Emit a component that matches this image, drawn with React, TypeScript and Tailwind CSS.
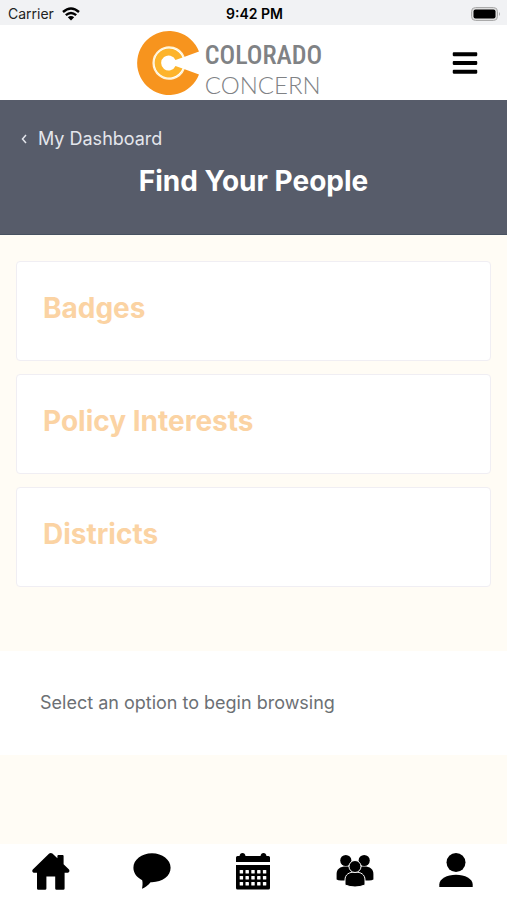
import { FaBars } from "react-icons/fa";

const options = ["Badges", "Policy Interests", "Districts"];

function HomeIcon() {
  return (
    <svg viewBox="0 0 38 38" className="h-[38px] w-[38px]" fill="currentColor">
      <path d="M17.2 1.6Q18.8.2 20.4 1.6L25.4 6.3V4Q25.4 3 26.4 3H30.6Q31.6 3 31.6 4V12.2L37 17.6Q38.2 19.6 36 20.8H32.6V36.4Q32.6 37.8 31.2 37.8H24.6Q23.2 37.8 23.2 36.4V24.4H14.4V36.4Q14.4 37.8 13 37.8H6.4Q5 37.8 5 36.4V20.8H1.6Q-.6 19.6.8 17.6Z" />
    </svg>
  );
}

function ChatIcon() {
  return (
    <svg viewBox="0 0 38 38" className="h-[38px] w-[38px]" fill="currentColor">
      <path d="M19 1.2C29.4 1.2 37.6 7.6 37.6 15.8S29.4 30.2 19 30.2H17.6C15 33.4 12 35.6 9 36.8C9.6 33.6 9.8 31 9.2 28.2C3.8 25.6.4 21 .4 15.8C.4 7.6 8.6 1.2 19 1.2Z" />
    </svg>
  );
}

function CalendarIcon() {
  const columns = [3.7, 9.5, 15.3, 21.1, 26.9];
  const rows = [18, 24, 30];
  return (
    <svg viewBox="0 0 34 38" className="h-[38px] w-[34px]" fill="currentColor">
      <path d="M0 5.5Q0 4 1.5 4H3.5Q4 1 6.5 1T9.5 4H24.5Q25 1 27.5 1T30.5 4H32.5Q34 4 34 5.5V10H0Z" />
      <path d="M0 13H34V36Q34 37.5 32.5 37.5H1.5Q0 37.5 0 36Z" />
      {rows.map((y) =>
        columns.map((x) => (
          <rect key={`${x}-${y}`} x={x} y={y} width="3.4" height="3.6" rx=".6" fill="#fff" />
        ))
      )}
    </svg>
  );
}

function GroupIcon() {
  return (
    <svg viewBox="0 -1 38 38" className="h-[38px] w-[38px]" fill="currentColor">
      <circle cx="9.8" cy="7.5" r="5.6" />
      <circle cx="28.2" cy="7.5" r="5.6" />
      <path d="M.6 26.5V21C.6 16 4 13.5 9.8 13.5S19 16 19 21V27.5H5Q2 27.5.6 26.5Z" />
      <path d="M37.4 26.5V21C37.4 16 34 13.5 28.2 13.5S19 16 19 21V27.5H33Q36 27.5 37.4 26.5Z" />
      <g stroke="#fff" strokeWidth="1">
        <path d="M9 32V27C9 21.5 13 19 19 19S29 21.5 29 27V32Q24 34 19 34T9 32Z" />
        <circle cx="19" cy="13.5" r="6" />
      </g>
    </svg>
  );
}

function PersonIcon() {
  return (
    <svg viewBox="0 0 34 38" className="h-[38px] w-[34px]" fill="currentColor">
      <circle cx="17" cy="10.5" r="9.5" />
      <path d="M.3 35V32.5C.3 27 8 22.8 17 22.8S33.7 27 33.7 32.5V35Z" />
    </svg>
  );
}

const tabs = [
  { label: "Home", icon: HomeIcon },
  { label: "Messages", icon: ChatIcon },
  { label: "Calendar", icon: CalendarIcon },
  { label: "Groups", icon: GroupIcon },
  { label: "Profile", icon: PersonIcon },
];

export default function App() {
  return (
    <div className="flex min-h-screen flex-col bg-[#fffcf5] font-['Inter',sans-serif]">

      {/* Status bar */}
      <div className="grid h-[25px] grid-cols-3 items-center bg-[#f1f2f4] pt-0.5 pr-1.5 pl-2 text-[#222]">
        <div className="flex items-center gap-2 text-sm">
          <span>Carrier</span>
          <svg viewBox="0 0 18 14" className="h-3.5 w-[18px]" fill="none" stroke="#000" strokeWidth="2.4">
            <path d="M1 5Q9-2 17 5" />
            <path d="M3.8 8.2Q9 3.6 14.2 8.2" />
            <path d="M9 13.5L5.8 10.3Q9 7.8 12.2 10.3Z" fill="#000" stroke="none" />
          </svg>
        </div>
        <span className="text-center text-sm font-semibold text-black">9:42 PM</span>
        <svg viewBox="0 0 30 14" className="h-3.5 w-[30px] justify-self-end">
          <rect x=".5" y=".5" width="26" height="13" rx="4" fill="#ddd" stroke="#aaa" />
          <rect x="2.5" y="2.5" width="22" height="9" rx="2" fill="#000" />
          <path d="M28 5Q30 7 28 9Z" fill="#aaa" />
        </svg>
      </div>

      {/* Header */}
      <header className="grid h-[75px] grid-cols-[1fr_auto_1fr] items-center bg-white px-7">
        <a href="#" className="col-start-2 flex items-center gap-1 pr-12 text-[#808285]">
          <svg viewBox="0 0 64 66" className="h-[66px] w-16">
            <path d="M62 21.5A32 32 0 1 0 62 44.5L47 39A16 16 0 1 1 47 27Z" fill="#f7941e" />
            <path d="M47 27A16 16 0 1 0 47 39" fill="none" stroke="#fff3d6" strokeWidth="1.5" />
            <path d="M45.5 27.5A14.5 14.5 0 1 0 45.5 38.5L38.5 36A7.5 7.5 0 1 1 38.5 30Z" fill="#fdb42b" />
          </svg>
          <span className="flex flex-col pt-3">
            <span className="font-['Roboto_Condensed','Liberation_Sans_Narrow',sans-serif] text-[26px] leading-8 font-medium">COLORADO</span>
            <span className="font-['Lato',sans-serif] text-2xl leading-7 font-light">CONCERN</span>
          </span>
        </a>
        <button type="button" aria-label="Menu" className="justify-self-end text-black">
          <FaBars size={28} />
        </button>
      </header>

      {/* Page title */}
      <section className="flex h-[135px] flex-col border-b border-[#475160] bg-[#575c6a] px-5 pt-[25px] text-white">
        <a href="#" className="flex items-center gap-2.5 text-lg leading-7 text-[#e4e6ec]">
          <svg viewBox="0 0 8 10" className="h-2.5 w-2" fill="none" stroke="currentColor" strokeWidth="1.5">
            <path d="M6 1L2.5 5L6 9" />
          </svg>
          My Dashboard
        </a>
        <h1 className="mt-3 text-center text-[28px] leading-8 font-bold">Find Your People</h1>
      </section>

      {/* Options */}
      <main className="flex-1">
        <div className="flex flex-col gap-[13px] px-4 pt-[26px] pb-16">
          {options.map((option) => (
            <button
              key={option}
              type="button"
              className="h-[100px] rounded border border-[#f0eef3] bg-white px-[26px] pb-1.5 text-left text-[28px] font-bold text-[#fbd3a3]"
            >
              {option}
            </button>
          ))}
        </div>
        <p className="bg-white px-10 py-10 text-lg leading-6 text-[#6c7074]">
          Select an option to begin browsing
        </p>
      </main>

      {/* Bottom tabs */}
      <nav className="grid h-14 grid-cols-5 bg-white pb-0.5 text-black">
        {tabs.map((tab) => {
          const Icon = tab.icon;

          return (
            <a key={tab.label} href="#" aria-label={tab.label} className="flex items-center justify-center">
              <Icon />
            </a>
          );
        })}
      </nav>

    </div>
  );
}
